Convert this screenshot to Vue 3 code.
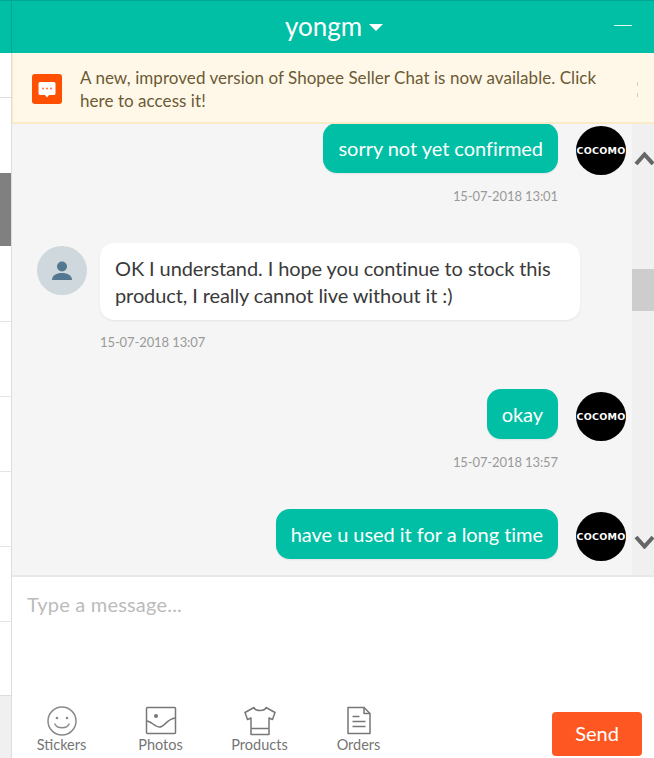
<template>
  <div class="window">
    <header class="header">
      <div class="header-side"></div>
      <div class="header-main">
        <span class="title">yongm</span>
        <span class="caret"></span>
        <span class="minimize"></span>
      </div>
    </header>

    <div class="body">
      <aside class="side">
        <div class="side-list">
          <div class="side-gap"></div>
          <div class="side-top"></div>
          <div class="side-thumb"></div>
          <div v-for="n in 6" :key="n" class="side-row"></div>
        </div>
      </aside>

      <main class="main">
        <div class="banner">
          <span class="banner-icon">
            <svg width="30" height="30" viewBox="0 0 30 30">
              <rect width="30" height="30" rx="3" fill="#fe5000" />
              <path d="M8 8h14a1.5 1.5 0 0 1 1.500 1.500v10a1.500 1.500 0 0 1-1.500 1.500h-5l-2 2.500-2-2.500H8a1.500 1.500 0 0 1-1.500-1.500v-10A1.500 1.500 0 0 1 8 8z" fill="#fff" />
              <circle cx="11" cy="14.500" r="1.100" fill="#fe7a50" />
              <circle cx="15" cy="14.500" r="1.100" fill="#fe7a50" />
              <circle cx="19" cy="14.500" r="1.100" fill="#fe7a50" />
            </svg>
          </span>
          <p class="banner-text">A new, improved version of Shopee Seller Chat is now available. Click here to access it!</p>
          <span class="banner-close"></span>
        </div>

        <div class="chat">
          <div class="messages">
            <template v-for="msg in messages" :key="msg.text">
              <div class="row" :class="msg.mine ? 'mine' : 'theirs'" :style="{ marginBottom: msg.gap + 'px' }">
                <div v-if="!msg.mine" class="avatar guest">
                  <svg width="24" height="24" viewBox="0 0 24 24">
                    <circle cx="12" cy="7.500" r="5" fill="#54788f" />
                    <path d="M2 21c0-4.500 4.500-7 10-7s10 2.500 10 7z" fill="#54788f" />
                  </svg>
                </div>
                <div class="bubble-wrap">
                  <div class="bubble" v-html="msg.text"></div>
                  <div v-if="msg.time" class="time">{{ msg.time }}</div>
                </div>
                <div v-if="msg.mine" class="avatar shop">COCOMO</div>
              </div>
            </template>
          </div>
          <div class="scrollbar">
            <svg class="arrow-up" width="22" height="14" viewBox="0 0 22 14">
              <path d="M4 13l8.500-9.500 8.500 9.500" fill="none" stroke="#666" stroke-width="4" />
            </svg>
            <div class="scroll-thumb"></div>
            <svg class="arrow-down" width="22" height="14" viewBox="0 0 22 14">
              <path d="M4 2l8.500 9.500 8.500-9.500" fill="none" stroke="#666" stroke-width="4" />
            </svg>
          </div>
        </div>

        <div class="composer">
          <div class="placeholder">Type a message...</div>
          <div class="toolbar">
            <div class="tools">
              <div class="tool">
                <svg width="32" height="30" viewBox="0 0 32 30" fill="none" stroke="#8a8a8a" stroke-width="1.500">
                  <circle cx="16" cy="15" r="14" />
                  <circle cx="11" cy="12" r="1.300" fill="#8a8a8a" stroke="none" />
                  <circle cx="21" cy="12" r="1.300" fill="#8a8a8a" stroke="none" />
                  <path d="M9 18c2 5 12 5 14 0" stroke-linecap="round" />
                </svg>
                <span>Stickers</span>
              </div>
              <div class="tool">
                <svg width="32" height="30" viewBox="0 0 32 30" fill="none" stroke="#777" stroke-width="1.500">
                  <rect x="1.500" y="1.500" width="29" height="26" rx="1" />
                  <circle cx="11" cy="10" r="2" fill="#777" stroke="none" />
                  <path d="M1.500 15c5 0 8 6 13 6s7-8 16-9" />
                </svg>
                <span>Photos</span>
              </div>
              <div class="tool">
                <svg width="32" height="30" viewBox="0 0 32 30" fill="none" stroke="#777" stroke-width="1.500" stroke-linejoin="round">
                  <path d="M10 1.500l-9 5 2.500 7 3.500-1.500v16.500h18V12l3.500 1.500 2.500-7-9-5c-1 4-11 4-12 0z" />
                  <path d="M7 22.500h18" />
                </svg>
                <span>Products</span>
              </div>
              <div class="tool">
                <svg width="32" height="30" viewBox="0 0 32 30" fill="none" stroke="#777" stroke-width="1.500" stroke-linejoin="round">
                  <path d="M5 1.500h16l6 6v20H5z" />
                  <path d="M21 1.500v6h6" />
                  <path d="M9.500 10.500h7M9.500 15.500h13M9.500 20.500h13" />
                </svg>
                <span>Orders</span>
              </div>
            </div>
            <button class="send">Send</button>
          </div>
        </div>
      </main>
    </div>
  </div>
</template>

<script setup>
const messages = [
  { mine: true, text: "sorry not yet confirmed", time: "15-07-2018 13:01", gap: 38 },
  { mine: false, text: "OK I understand. I hope you continue to stock this<br>product, I really cannot live without it :)", time: "15-07-2018 13:07", gap: 38 },
  { mine: true, text: "okay", time: "15-07-2018 13:57", gap: 38 },
  { mine: true, text: "have u used it for a long time", time: "", gap: 0 }
];
</script>

<style>
html, body {
  margin: 0;
  background: #fff;
}
</style>

<style scoped>
.window {
  width: 654px;
  height: 758px;
  display: flex;
  flex-direction: column;
  overflow: hidden;
  font-family: Lato, "Open Sans", sans-serif;
  color: #3a3a3a;
}
.header {
  height: 53px;
  flex: none;
  display: flex;
  background: #00bfa5;
  border-top: 1px solid #00a892;
  box-sizing: border-box;
}
.header-side {
  width: 11px;
  border-right: 1px solid #00a892;
}
.header-main {
  flex: 1;
  display: flex;
  align-items: center;
  justify-content: center;
  padding-left: 2px;
  position: relative;
  color: #fff;
}
.title {
  font-size: 26px;
  margin-bottom: 2px;
}
.caret {
  width: 0;
  height: 0;
  margin-left: 7px;
  border-left: 7px solid transparent;
  border-right: 7px solid transparent;
  border-top: 7px solid #fff;
}
.minimize {
  position: absolute;
  right: 22px;
  top: 24px;
  width: 18px;
  height: 1px;
  background: #e4f8f4;
}
.body {
  flex: 1;
  display: flex;
  min-height: 0;
}
.side {
  width: 11px;
  flex: none;
  background: #f0f0f0;
  border-right: 1px solid #ddd;
}
.side-list {
  background: #fff;
}
.side-gap {
  height: 44px;
}
.side-top {
  height: 76px;
  border-top: 1px solid #ddd;
  box-sizing: border-box;
}
.side-thumb {
  height: 73px;
  background: #808080;
}
.side-row {
  height: 75px;
  border-bottom: 1px solid #e4e4e4;
  box-sizing: border-box;
}
.side-thumb + .side-row {
  height: 76px;
}
.side-row:last-child {
  height: 74px;
  border-bottom-color: #ddd;
}
.main {
  flex: 1;
  min-width: 0;
  display: flex;
  flex-direction: column;
}
.banner {
  height: 71px;
  flex: none;
  box-sizing: border-box;
  display: flex;
  align-items: center;
  padding: 0 0 0 19px;
  background: #fff8e8;
  border-left: 1px solid #f8ecc8;
  border-bottom: 2px solid #f8ecc8;
  position: relative;
}
.banner-icon {
  width: 30px;
  height: 30px;
  flex: none;
  margin-top: 2px;
}
.banner-icon svg {
  display: block;
}
.banner-text {
  margin: 2px 0 0 18px;
  width: 530px;
  font-size: 17px;
  line-height: 23px;
  letter-spacing: 0.05px;
  color: #6b5a35;
}
.banner-close {
  position: absolute;
  right: 16px;
  top: 29px;
  width: 1px;
  height: 15px;
  background: linear-gradient(#ccc 0 4px, transparent 4px 11px, #ccc 11px);
}
.chat {
  flex: 1;
  min-height: 0;
  display: flex;
  background: #f5f5f5;
}
.messages {
  flex: 1;
  min-width: 0;
  overflow: hidden;
  padding: 0 6px 0 25px;
}
.row {
  display: flex;
  gap: 18px;
}
.row:first-child {
  margin-top: -1px;
}
.row.mine {
  justify-content: flex-end;
}
.row.theirs {
  gap: 13px;
}
.bubble-wrap {
  display: flex;
  flex-direction: column;
}
.mine .bubble-wrap {
  align-items: flex-end;
}
.bubble {
  padding: 12px 15px 11px;
  font-size: 20px;
  line-height: 27px;
  white-space: nowrap;
  border-radius: 14px;
  box-shadow: 0 1px 2px rgba(0, 0, 0, 0.08);
}
.mine .bubble {
  background: #00bfa5;
  color: #fff;
  letter-spacing: -0.04px;
}
.theirs .bubble {
  background: #fff;
  width: 480px;
  box-sizing: border-box;
  letter-spacing: -0.1px;
}
.time {
  margin-top: 14px;
  font-size: 13px;
  line-height: 18px;
  letter-spacing: -0.1px;
  color: #999;
}
.theirs .time {
  margin-top: 13px;
}
.avatar {
  width: 50px;
  height: 49px;
  border-radius: 50%;
  flex: none;
  margin-top: 3px;
  overflow: hidden;
  display: flex;
  align-items: center;
  justify-content: center;
}
.avatar.shop {
  background: #000;
  color: #fff;
  font-family: "DejaVu Sans", sans-serif;
  font-size: 9.500px;
  font-weight: 700;
  letter-spacing: 0.2px;
}
.avatar.guest {
  background: #cfd8dc;
}
.scrollbar {
  width: 22px;
  flex: none;
  background: #f0f0f0;
  display: flex;
  flex-direction: column;
}
.arrow-up {
  margin-top: 27px;
  flex: none;
}
.scroll-thumb {
  height: 42px;
  margin-top: 104px;
  background: #cdcdcd;
}
.arrow-down {
  margin-top: 224px;
  flex: none;
}
.composer {
  height: 183px;
  flex: none;
  box-sizing: border-box;
  border-top: 2px solid #e8e8e8;
  background: #fff;
  display: flex;
  flex-direction: column;
  justify-content: space-between;
}
.placeholder {
  padding: 14px 0 0 15px;
  font-size: 20px;
  line-height: 26px;
  letter-spacing: 0.2px;
  color: #bbb;
}
.toolbar {
  display: flex;
  justify-content: space-between;
  align-items: flex-end;
  padding: 0 12px 2px 0;
}
.tools {
  display: flex;
}
.tool {
  width: 99px;
  display: flex;
  flex-direction: column;
  align-items: center;
  font-size: 14.500px;
  line-height: 18px;
  color: #757575;
  margin-bottom: 2px;
}
.send {
  width: 90px;
  height: 44px;
  padding-bottom: 3px;
  border: none;
  border-radius: 4px;
  background: #ff5722;
  color: #fff;
  font-family: inherit;
  font-size: 20px;
}
</style>
